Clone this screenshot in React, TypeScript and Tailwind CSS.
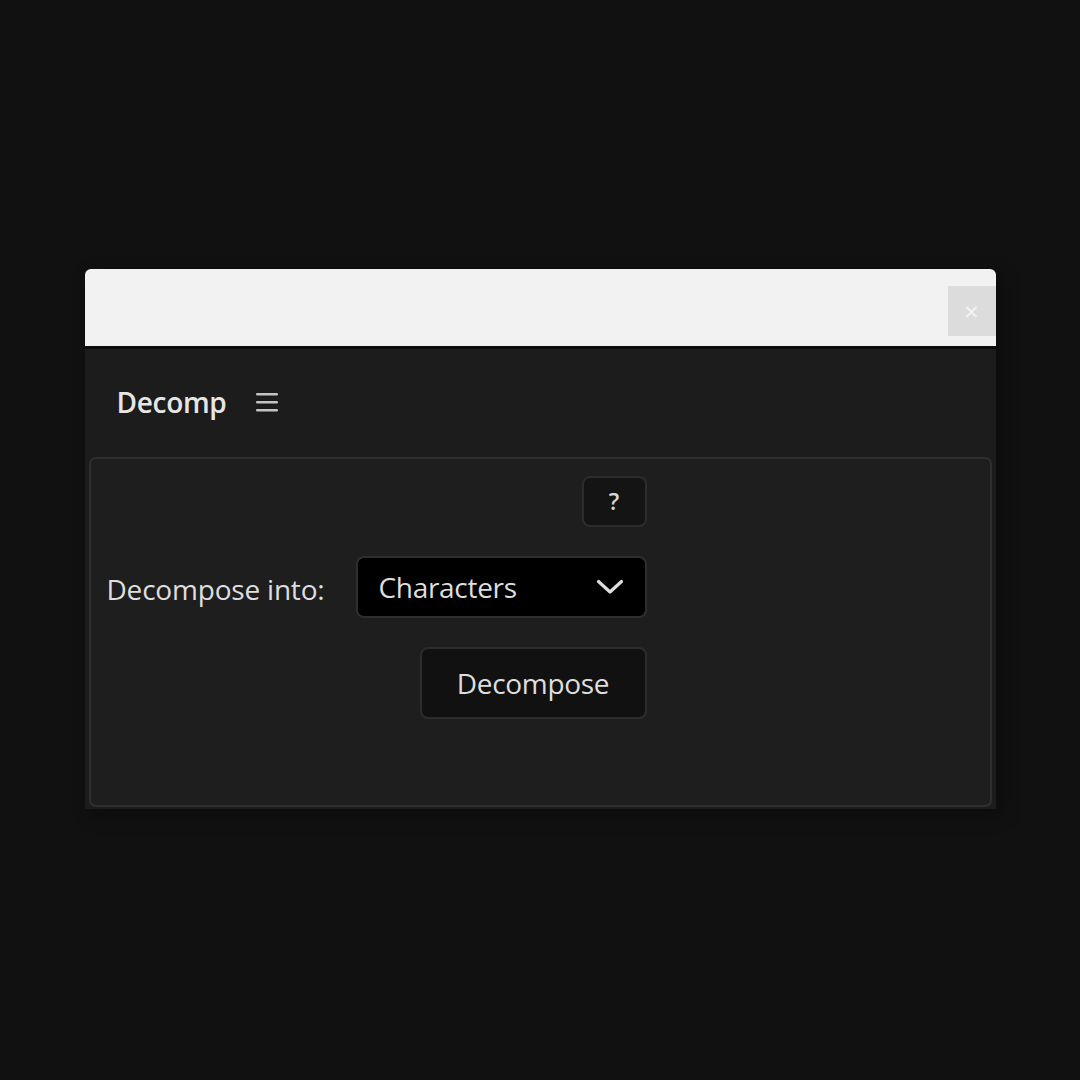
import React, { useState } from 'react';

const font = { fontFamily: '"Open Sans", "Noto Sans", sans-serif' };

function ChevronDown() {
    return (
        <svg width="28" height="18" viewBox="0 0 28 18" fill="none">
            <path d="M2.5 3.5 L14 14 L25.5 3.5" stroke="#dedede" strokeWidth="3.2" strokeLinecap="round" strokeLinejoin="round" />
        </svg>
    );
}

function MenuIcon() {
    return (
        <svg width="24" height="22" viewBox="0 0 24 22">
            <rect x="1" y="2" width="22" height="2.6" rx="1.3" fill="#c4c4c4" />
            <rect x="1" y="10" width="22" height="2.6" rx="1.3" fill="#c4c4c4" />
            <rect x="1" y="18" width="22" height="2.6" rx="1.3" fill="#c4c4c4" />
        </svg>
    );
}

export default function App() {
    const [mode, setMode] = useState('Characters');

    return (
        <div className="min-h-[1080px] w-[1080px] bg-[#111111] flex items-start justify-center pt-[269px]" style={font}>
            <div className="w-[911px] bg-[#1c1c1c] rounded-t-[6px] shadow-[6px_6px_18px_rgba(0,0,0,0.35)] flex flex-col">
                {/* title bar */}
                <div className="h-[77px] bg-[#f2f2f2] rounded-t-[6px] flex items-start justify-end pt-[17px]">
                    <button className="w-[48px] h-[50px] bg-[#dcdcdc] flex items-center justify-center text-[#f4f4f4] text-[26px] leading-none">
                        ×
                    </button>
                </div>
                <div className="h-[3px] bg-[#0c0c0c]" />

                {/* panel header */}
                <div className="h-[108px] flex items-center gap-[28px] pl-[32px] pb-[3px]">
                    <span className="text-[28px] font-semibold text-[#e6e6e6] tracking-[-0.3px]">Decomp</span>
                    <MenuIcon />
                </div>

                {/* content */}
                <div className="mx-[4px] mb-[2px] h-[350px] bg-[#1e1e1e] border-2 border-[#2f2f2f] rounded-[7px] pt-[17px] pl-[16px]">
                    <div className="w-[540px] flex flex-col items-end">
                        <button className="w-[65px] h-[51px] bg-[#141414] border-2 border-[#2c2c2c] rounded-[8px] text-[#d8d8d8] text-[23px] font-semibold flex items-center justify-center">
                            ?
                        </button>
                        <div className="w-full flex items-center justify-between mt-[29px]">
                            <span className="text-[28px] text-[#dedede] tracking-[-0.2px] pt-[4px]">Decompose into:</span>
                            <button
                                onClick={() => setMode(mode)}
                                className="w-[291px] h-[62px] bg-black border-2 border-[#2e2e2e] rounded-[8px] flex items-center justify-between pl-[21px] pr-[21px]"
                            >
                                <span className="text-[28px] text-[#dedede] tracking-[-0.3px]">{mode}</span>
                                <ChevronDown />
                            </button>
                        </div>
                        <button className="mt-[29px] w-[227px] h-[72px] bg-[#111111] border-2 border-[#2c2c2c] rounded-[8px] text-[28px] text-[#dedede] tracking-[-0.3px] flex items-center justify-center">
                            Decompose
                        </button>
                    </div>
                </div>
            </div>
        </div>
    );
}
